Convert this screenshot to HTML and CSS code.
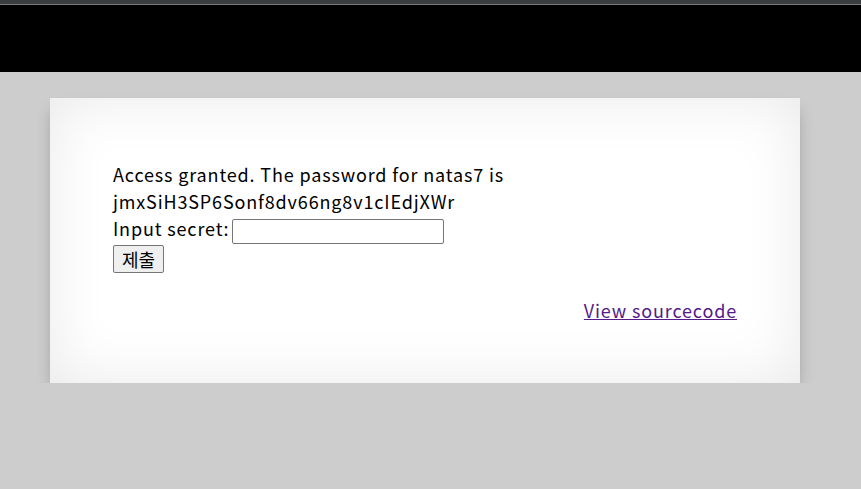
FILE: index.html
```html
<!DOCTYPE html>
<html>
<head>
<meta charset="utf-8">
<link rel="stylesheet" href="styles.css">
</head>
<body>
<div class="topbar"></div>
<div class="card">
  <div class="msg">Access granted. The password for natas7 is<br>jmxSiH3SP6Sonf8dv66ng8v1cIEdjXWr</div>
  <form class="form">
    <div class="row">Input secret: <input class="field" type="text"></div>
    <div class="row"><button class="btn" type="button">제출</button></div>
  </form>
  <div class="src"><a class="link" href="#">View sourcecode</a></div>
</div>
</body>
</html>
```
FILE: styles.css
```css
html, body { margin: 0; padding: 0; }
body {
  background: #cdcdcd;
  font-family: "Noto Sans CJK KR", "Noto Sans", sans-serif;
  font-size: 18px;
  letter-spacing: 0.85px;
  color: #000;
}
.topbar {
  height: 68px;
  background: #000;
  border-top: 4px solid #3b3c3f;
  box-shadow: inset 0 1px 0 #7a7a7a;
}
.card {
  box-sizing: border-box;
  width: 750px;
  height: 285px;
  margin: 26px 0 0 50px;
  padding: 63px 63px 0 63px;
  background: #fff;
  box-shadow: 0 10px 16px -4px rgba(0,0,0,0.3), inset 0 0 60px rgba(0,0,0,0.09);
}
.msg { line-height: 27px; }
.form { margin: 0; }
.row { line-height: 27px; }
.field {
  box-sizing: border-box;
  width: 212px;
  height: 25px;
  padding: 1px 2px;
  border: 1px solid #767676;
  border-radius: 2px;
  font-size: 13px;
  vertical-align: baseline;
  margin: 0 0 0 -2px;
}
.btn {
  box-sizing: border-box;
  font-family: "Noto Sans CJK KR", sans-serif;
  font-size: 18px;
  letter-spacing: 0;
  padding: 0 6px;
  width: 51px;
  height: 28px;
  border: 1px solid #767676;
  border-radius: 2px;
  background: #efefef;
  color: #000;
  margin: 1px 0 0 0;
}
.src { text-align: right; margin-top: 24px; }
.link { color: #551a8b; }
```
